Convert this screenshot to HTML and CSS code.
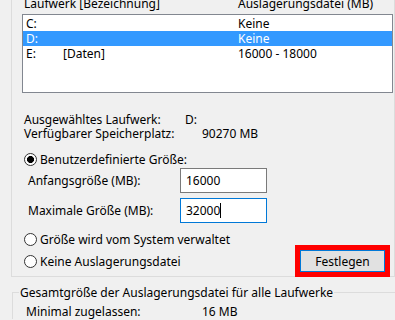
FILE: index.html
```html
<!DOCTYPE html>
<html lang="de">
<head>
    <meta charset="UTF-8">
    <title>Virtueller Arbeitsspeicher</title>
    <link rel="stylesheet" href="styles.css">
</head>
<body>
    <div class="group-top">
        <div class="list-head">
            <span>Laufwerk [Bezeichnung]</span>
            <span>Auslagerungsdatei (MB)</span>
        </div>

        <!-- Drive list -->
        <div class="listbox">
            <div class="row"><span>C:</span><span></span><span>Keine</span></div>
            <div class="row selected"><span>D:</span><span></span><span>Keine</span></div>
            <div class="row"><span>E:</span><span>[Daten]</span><span>16000 - 18000</span></div>
        </div>

        <div class="info">
            <div class="info-row"><span class="info-label">Ausgewähltes Laufwerk:</span><span>D:</span></div>
            <div class="info-row"><span class="info-label wide">Verfügbarer Speicherplatz:</span><span>90270 MB</span></div>
        </div>

        <label class="radio-row first"><span class="radio checked"></span>Benutzerdefinierte Größe:</label>

        <div class="field-row">
            <span class="field-label">Anfangsgröße (MB):</span>
            <div class="field">16000</div>
        </div>
        <div class="field-row">
            <span class="field-label">Maximale Größe (MB):</span>
            <div class="field focused">32000<span class="caret"></span></div>
        </div>

        <label class="radio-row system"><span class="radio"></span>Größe wird vom System verwaltet</label>
        <div class="bottom-row">
            <label class="radio-row"><span class="radio"></span>Keine Auslagerungsdatei</label>
            <button class="set-button">Festlegen</button>
        </div>
    </div>

    <fieldset class="group-total">
        <legend>Gesamtgröße der Auslagerungsdatei für alle Laufwerke</legend>
        <div class="info-row"><span class="info-label total">Minimal zugelassen:</span><span>16 MB</span></div>
    </fieldset>
</body>
</html>
```

FILE: styles.css
```css
html {
    overflow: hidden;
}
body {
    margin: 0;
    background-color: #f0f0f0;
    font-family: "Noto Sans", "DejaVu Sans", sans-serif;
    font-size: 12px;
    color: #000;
    overflow: hidden;
    height: 320px;
}
.group-top {
    box-sizing: border-box;
    height: 281px;
    margin-left: 11px;
    border: 1px solid #dcdcdc;
    border-top: none;
}
.list-head {
    display: grid;
    grid-template-columns: 214px 1fr;
    margin-top: -4px;
    padding-left: 12px;
    height: 18px;
    line-height: 15px;
    color: #000;
}
.listbox {
    box-sizing: border-box;
    height: 79px;
    margin: 0 1px 0 10px;
    padding-top: 1px;
    background-color: #fff;
    border: 1px solid #828790;
}
.row {
    display: grid;
    grid-template-columns: 37px 175px 1fr;
    height: 15px;
    line-height: 15px;
    padding-left: 3px;
}
.row.selected {
    background-color: #3399ff;
    color: #fff;
}
.info {
    margin-top: 20px;
    padding-left: 12px;
}
.info-row {
    display: flex;
    line-height: 14px;
}
.info-label {
    width: 161px;
}
.info-label.wide {
    width: 178px;
}
.radio-row {
    display: flex;
    align-items: center;
    height: 15px;
    line-height: 15px;
    padding-left: 12px;
}
.radio-row.first {
    margin-top: 11px;
}
.radio-row.system {
    margin-top: 9px;
}
.radio {
    box-sizing: border-box;
    width: 13px;
    height: 13px;
    margin-right: 3px;
    border: 1px solid #333;
    border-radius: 50%;
    background-color: #fff;
}
.radio.checked {
    background: radial-gradient(circle, #000 3.2px, #fff 3.8px);
}
.field-row {
    display: flex;
    align-items: center;
    margin-top: 1px;
    padding-left: 16px;
}
.field-row + .field-row {
    margin-top: 5px;
}
.field-label {
    width: 152px;
}
.field {
    box-sizing: border-box;
    display: flex;
    align-items: center;
    width: 87px;
    height: 25px;
    padding-left: 5px;
    background-color: #fff;
    border: 1px solid #7a7a7a;
}
.field.focused {
    border-color: #0078d7;
}
.caret {
    width: 1px;
    height: 15px;
    background-color: #000;
}
.bottom-row {
    display: flex;
    align-items: center;
    justify-content: space-between;
    margin-top: 3px;
    margin-right: 9px;
}
.bottom-row .radio-row {
    padding-left: 12px;
}
.set-button {
    box-sizing: border-box;
    width: 85px;
    height: 22px;
    padding: 0;
    font-family: inherit;
    font-size: 12px;
    color: #000;
    background-color: #e1e1e1;
    border: 1px solid #0078d7;
    outline: 5px solid #f00;
}
.group-total {
    margin: 8px 0 0 12px;
    padding: 0 0 0 6px;
    border: 1px solid #dcdcdc;
    border-right: none;
    border-bottom: none;
}
.group-total legend {
    padding: 0 1px;
    line-height: 15px;
}
.group-total .info-row {
    margin-top: 5px;
    padding-left: 7px;
}
.info-label.total {
    width: 176px;
}
```
